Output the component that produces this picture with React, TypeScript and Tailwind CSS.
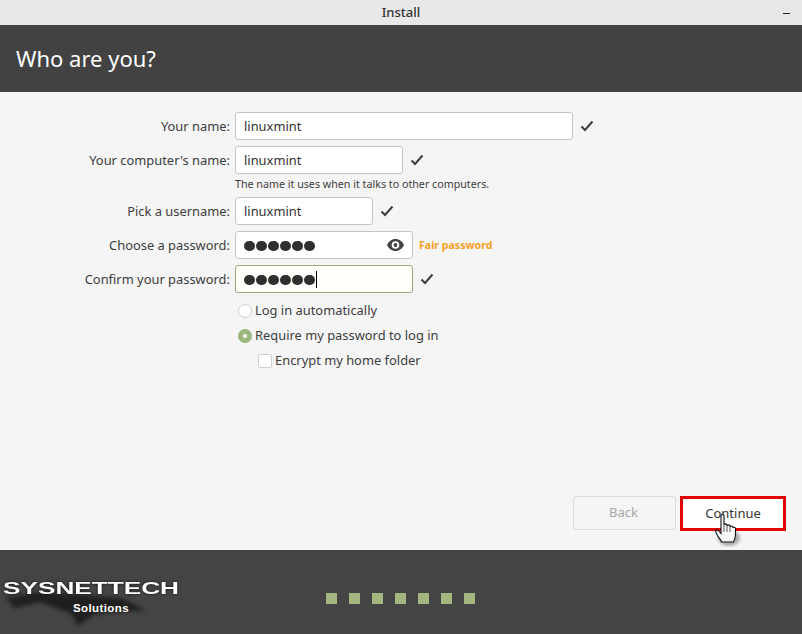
const dots = [0, 1, 2, 3, 4, 5, 6];

function Check() {
  return (
    <svg width="14" height="12" viewBox="0 0 14 12" className="shrink-0">
      <path d="M1.5 6.5 L5 10 L12.5 1.5" fill="none" stroke="#3d3d3d" strokeWidth="2" />
    </svg>
  );
}

function EyeIcon() {
  return (
    <svg width="17" height="12" viewBox="0 0 17 12" className="ml-auto mr-[8px]">
      <path
        fillRule="evenodd"
        d="M8.5 0C4.6 0 1.6 2.4 0 6c1.6 3.6 4.6 6 8.5 6s6.9-2.4 8.5-6C15.400 2.400 12.400 0 8.500 0zM8.500 2.200a3.800 3.800 0 1 1 0 7.600a3.800 3.800 0 0 1 0-7.600z"
        fill="#444"
      />
      <circle cx="8.500" cy="6" r="1.900" fill="#444" />
    </svg>
  );
}

function Row(props: { label: string; children: React.ReactNode; className?: string }) {
  return (
    <div className={"flex items-center " + (props.className ?? "")}>
      <label className="w-[230px] pt-[1px] text-right text-[12.9px] text-[#3d3d3d]">{props.label}</label>
      <div className="ml-[5px] flex items-center">{props.children}</div>
    </div>
  );
}

function Field(props: { value?: string; width: string; dots?: boolean; focus?: boolean; eye?: boolean }) {
  return (
    <div
      className={
        "flex h-[28px] items-center rounded-[3px] border pl-[8px] text-[12.9px] text-[#333] " +
        props.width +
        (props.focus ? " border-[#9aa87c] bg-[#fffffb]" : " border-[#c4c4c4] bg-white")
      }
    >
      {props.dots ? (
        <span className="mt-[2px] flex items-center gap-[1.5px]">
          {dots.slice(0, 6).map((d) => (
            <span key={d} className="h-[10.5px] w-[10.5px] rounded-full bg-[#2f2f2f]" />
          ))}
          {props.focus && <span className="mb-[2px] h-[17px] w-px bg-black" />}
        </span>
      ) : (
        <span className="pt-[1px]">{props.value}</span>
      )}
      {props.eye && <EyeIcon />}
    </div>
  );
}

function Hand() {
  return (
    <svg width="28" height="34" viewBox="0 0 28 34" className="absolute left-[714px] top-[513px]">
      <ellipse cx="15" cy="25" rx="11" ry="8" fill="#000" opacity="0.3" className="blur-[1.5px]" />
      <path
        d="M7 2.500c0-1.600 3-1.600 3 0V12c0-1.500 3-1.500 3 0v1c0-1.500 3-1.500 3 0v1c0-1.300 3-1.300 3 0v1c0-1 2.500-1 2.500.5V22c0 3-1 5-2 7H7.500c-.5-2-2-3-4-6.500-1-2-2.500-4-1.500-5 1.200-1.200 3 .5 5 3z"
        fill="#f7f7f7"
        stroke="#111"
        strokeWidth="1.100"
      />
      <path d="M10 12v7M13 13v6M16 14v5" stroke="#333" strokeWidth="0.800" />
    </svg>
  );
}

function Logo() {
  return (
    <div className="relative h-[56px] w-[190px]">
      <svg width="190" height="56" viewBox="0 0 190 56" className="absolute left-0 top-0 blur-[2px]">
        <path d="M6 24 L40 18 L120 24 L146 36 L95 40 L78 52 L72 40 L40 28 L15 34z" fill="#161616" opacity="0.8" />
      </svg>
      <span className="absolute left-[3px] top-[5px] origin-left scale-x-[1.54] font-['Liberation_Sans'] text-[17px] font-bold leading-[20px] text-white [text-shadow:0_0_2px_#000]">
        SYSNETTECH
      </span>
      <span className="absolute left-[73px] top-[27px] font-['Liberation_Sans'] text-[11.5px] font-bold leading-[14px] tracking-[0.4px] text-white">
        Solutions
      </span>
    </div>
  );
}

export default function App() {
  return (
    <div className="relative flex h-[634px] w-[802px] flex-col overflow-hidden bg-[#f5f5f5] font-['Noto_Sans',sans-serif]">
      <div className="relative flex h-[25px] items-center justify-center bg-[#e8e8e8] text-[13px] font-medium text-[#333]">
        Install
        <span className="absolute right-[12px] top-[13px] h-px w-[7px] bg-[#222]" />
      </div>
      <div className="flex h-[67px] items-center bg-[#424242] pl-[16px] text-[22px] text-white">Who are you?</div>

      <div className="flex flex-1 flex-col pt-[20px]">
        <Row label="Your name:">
          <Field value="linuxmint" width="w-[338px]" />
          <span className="ml-[7px]"><Check /></span>
        </Row>
        <Row label="Your computer's name:" className="mt-[6px]">
          <Field value="linuxmint" width="w-[168px]" />
          <span className="ml-[7px]"><Check /></span>
        </Row>
        <div className="ml-[235px] mt-[3px] h-[20px] text-[10.7px] leading-[15px] text-[#3d3d3d]">
          The name it uses when it talks to other computers.
        </div>
        <Row label="Pick a username:">
          <Field value="linuxmint" width="w-[138px]" />
          <span className="ml-[7px]"><Check /></span>
        </Row>
        <Row label="Choose a password:" className="mt-[6px]">
          <Field dots eye width="w-[178px]" />
          <span className="ml-[6px] pt-[1px] text-[10.6px] font-bold text-[#f5a020]">Fair password</span>
        </Row>
        <Row label="Confirm your password:" className="mt-[6px]">
          <Field dots focus width="w-[178px]" />
          <span className="ml-[7px]"><Check /></span>
        </Row>

        <div className="ml-[238px] mt-[5px] flex flex-col text-[12.9px] text-[#3d3d3d]">
          <div className="flex h-[25px] items-center gap-[3px]">
            <span className="h-[14px] w-[14px] rounded-full border border-[#cfcfcf] bg-white" />
            Log in automatically
          </div>
          <div className="flex h-[25px] items-center gap-[3px]">
            <span className="flex h-[14px] w-[14px] items-center justify-center rounded-full bg-[#9ab87c]">
              <span className="h-[4px] w-[4px] rounded-full bg-white" />
            </span>
            Require my password to log in
          </div>
          <div className="ml-[20px] flex h-[25px] items-center gap-[3px]">
            <span className="h-[14px] w-[14px] rounded-[2px] border border-[#cfcfcf] bg-white" />
            Encrypt my home folder
          </div>
        </div>

        <div className="mt-auto flex justify-end gap-[4px] pb-[19px] pr-[16px] text-[13px]">
          <button className="h-[34px] w-[103px] rounded-[3px] border border-[#dcdcdc] bg-[#f5f5f5] pr-[2px] text-[#a8a8a8]">Back</button>
          <button className="h-[35px] w-[106px] border-[3px] border-[#e00000] bg-white text-[#333]">Continue</button>
        </div>
      </div>

      <div className="relative flex h-[84px] items-center justify-center bg-[#444444]">
        <div className="absolute left-0 top-[24px]"><Logo /></div>
        <div className="mr-[2px] mt-[13px] flex gap-[12px]">
          {dots.map((d) => (
            <span key={d} className="h-[11px] w-[11px] bg-[#a3b67f]" />
          ))}
        </div>
      </div>
      <Hand />
    </div>
  );
}
